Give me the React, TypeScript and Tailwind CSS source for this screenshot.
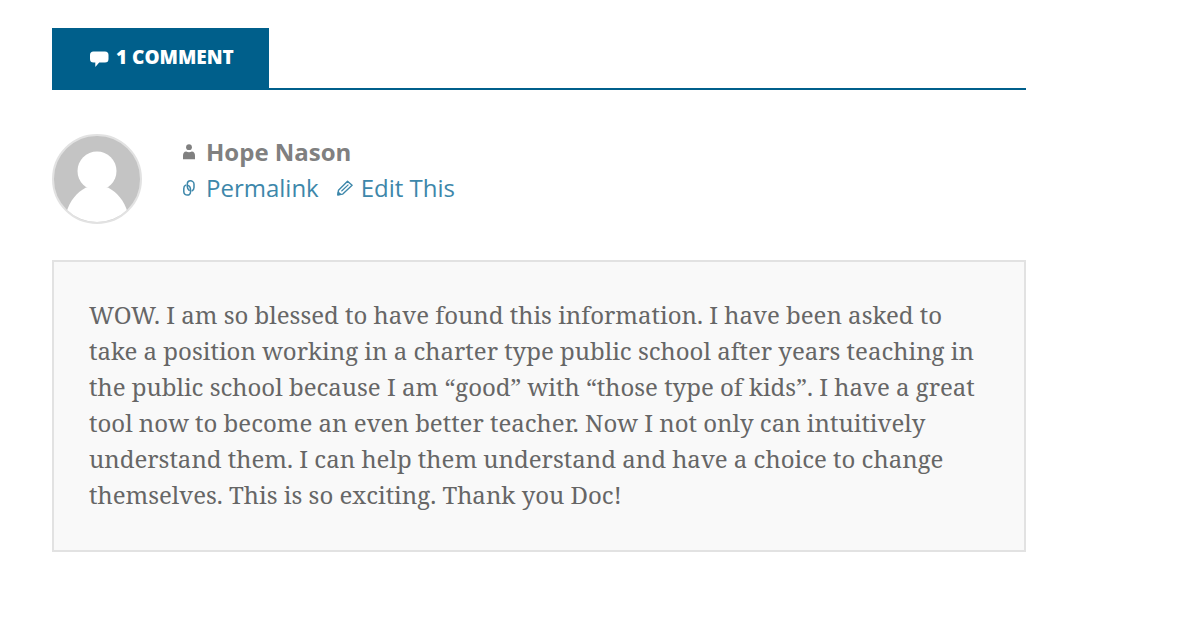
import React from "react";

const comments = [
  {
    id: 1,
    author: "Hope Nason",
    body: "WOW. I am so blessed to have found this information. I have been asked to take a position working in a charter type public school after years teaching in the public school because I am “good” with “those type of kids”. I have a great tool now to become an even better teacher. Now I not only can intuitively understand them. I can help them understand and have a choice to change themselves. This is so exciting. Thank you Doc!",
  },
];

function BubbleIcon() {
  return (
    <svg className="w-5 h-5 shrink-0" viewBox="0 0 20 20" fill="currentColor" aria-hidden="true">
      <path d="M3.500 4.500H15q3.500 0 3.500 3.500v4q0 3.500-3.500 3.500H9.200L5.300 20v-4.500H3.500Q0 15.500 0 12V8q0-3.500 3.500-3.500z" />
    </svg>
  );
}

function PersonIcon() {
  return (
    <svg className="w-3 h-4 shrink-0" viewBox="0 0 12 16" fill="currentColor" aria-hidden="true">
      <circle cx="6" cy="3.200" r="2.900" />
      <path d="M0 15.200v-3.400Q0 7.800 3.200 7.600q2.800 1.200 5.600 0Q12 7.800 12 11.800v3.400z" />
    </svg>
  );
}

function LinkIcon() {
  return (
    <svg className="w-3 h-4 shrink-0" viewBox="0 0 12 16" fill="none" stroke="currentColor" strokeWidth="1.500" strokeLinecap="round" aria-hidden="true">
      <path d="M6.200 10.300C5 9.300 4.300 8.300 4.300 6.800V4.200C4.300 2 5.700.8 7.400.8s3.600 1.300 3.600 3.400v3.300c0 1.500-.7 2.700-1.900 3.300" />
      <path d="M5.600 5.600c1.200.9 1.900 2 1.900 3.500v2.600c0 2.200-1.500 3.400-3.200 3.400S.8 13.800.8 11.700V8.500c0-1.500.7-2.700 1.900-3.300" />
    </svg>
  );
}

function PencilIcon() {
  return (
    <svg className="w-4 h-4 shrink-0" viewBox="0 0 16 16" fill="none" stroke="currentColor" strokeWidth="1.400" strokeLinejoin="round" aria-hidden="true">
      <path d="M.9 14.800l.6-4.600L10.500 1.200l4.600 4.100-9.300 8.800z" />
      <path d="M4.400 11.300l7-6.700" strokeWidth="1.200" />
      <path d="M.9 14.800l.4-2.600 2.200 2z" fill="currentColor" />
    </svg>
  );
}

function Avatar() {
  return (
    <svg className="w-[90px] h-[90px] shrink-0" viewBox="0 0 90 90" role="img" aria-label="Avatar">
      <defs>
        <clipPath id="avatar-clip">
          <circle cx="45" cy="45" r="43" />
        </clipPath>
      </defs>
      <circle cx="45" cy="45" r="44" fill="#c4c4c4" stroke="#e2e2e2" strokeWidth="2" />
      <g clipPath="url(#avatar-clip)" fill="#fff">
        <circle cx="45" cy="37" r="19.500" />
        <path d="M34 53.500h22C66 59 72 67 75.500 78v12h-61V78C18 67 24 59 34 53.500z" />
      </g>
    </svg>
  );
}

export default function App() {
  return (
    <main className="bg-white pt-7 pb-16 pl-[52px] pr-[161px] font-['Open_Sans',sans-serif]">
      <header className="flex border-b-2 border-[#005f8b]">
        <h2 className="flex items-center gap-1.5 h-[60px] pl-[38px] pr-[35px] pb-0.5 bg-[#005f8b] text-white text-[19px] font-extrabold uppercase">
          <BubbleIcon />
          {comments.length} Comment
        </h2>
      </header>

      {comments.map((comment) => (
        <article key={comment.id} className="mt-11">
          <div className="flex gap-[41px]">
            <Avatar />
            <div className="text-2xl leading-9">
              <div className="flex items-center gap-[11px] text-[#808080] font-bold">
                <PersonIcon />
                {comment.author}
              </div>
              <div className="flex gap-[18px] text-[#3d87aa]">
                <a href="#comment" className="flex items-center gap-[11px]">
                  <LinkIcon />
                  Permalink
                </a>
                <a href="#edit" className="flex items-center gap-2">
                  <PencilIcon />
                  Edit This
                </a>
              </div>
            </div>
          </div>

          <div className="mt-9 border-2 border-[#e2e2e2] bg-[#f9f9f9] px-[35px] pt-[35px] pb-[37px]">
            <p className="font-['Droid_Serif','Noto_Serif',serif] text-2xl leading-9 text-[#666]">
              {comment.body}
            </p>
          </div>
        </article>
      ))}
    </main>
  );
}
